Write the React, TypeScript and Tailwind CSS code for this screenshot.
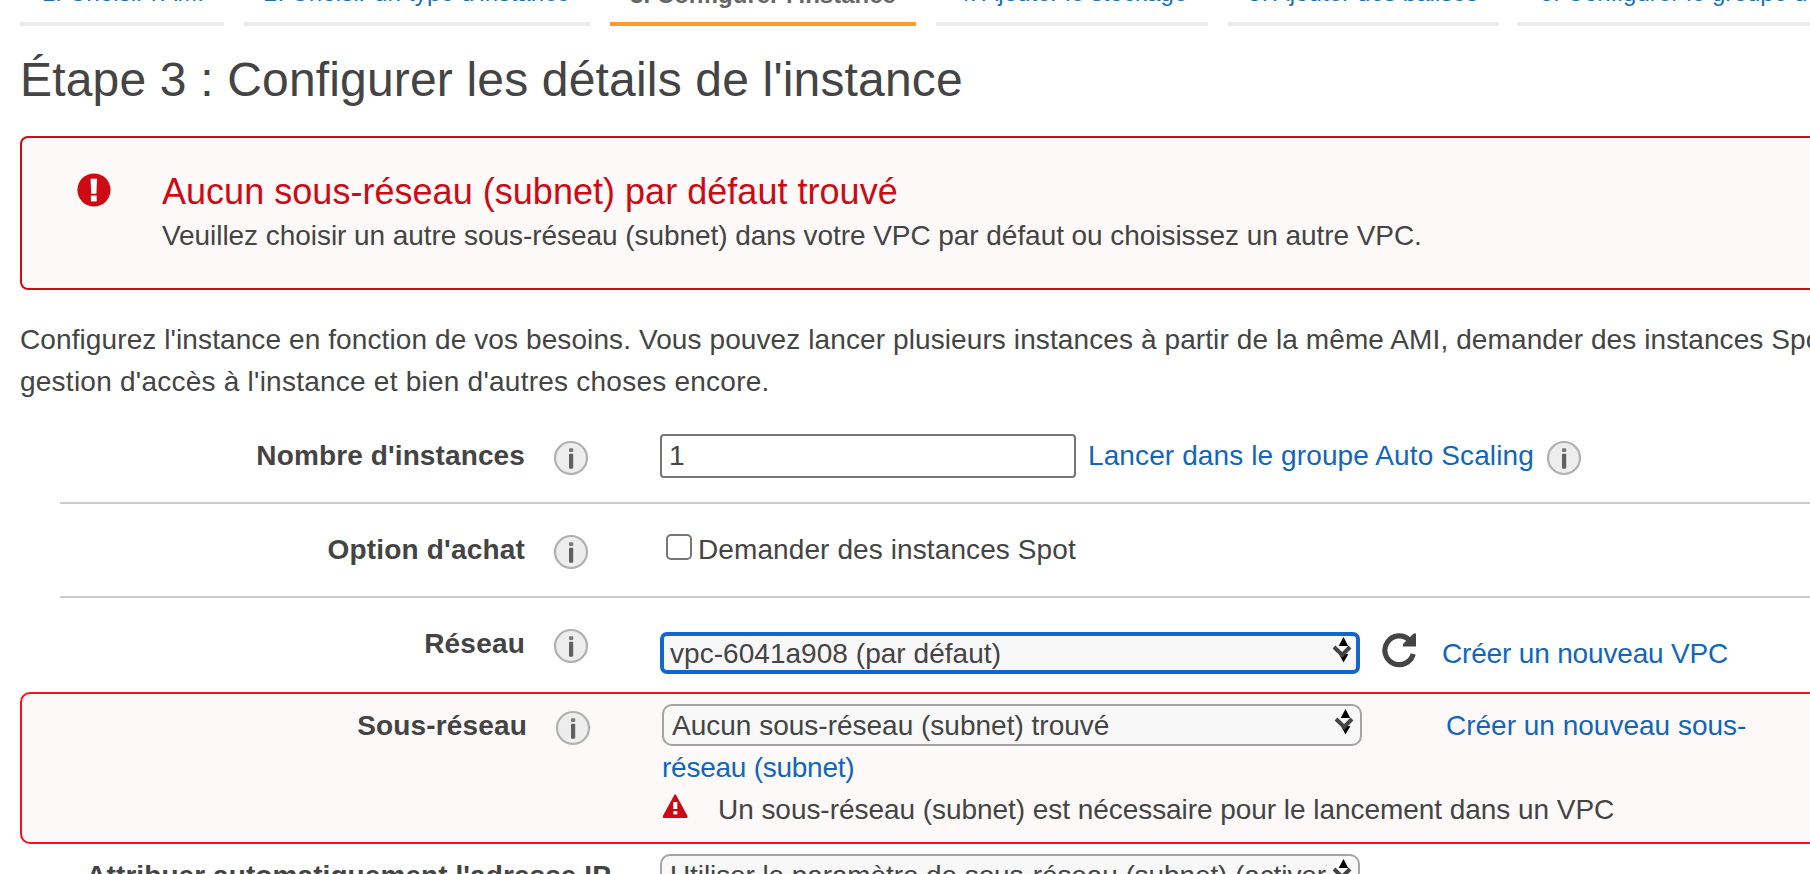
import type { ReactNode } from "react";

type Tab = { label: string; className: string };

const tabs: Tab[] = [
  { label: "1. Choisir l'AMI", className: "w-[204px] pl-0.5 tracking-[0.1px]" },
  { label: "2. Choisir un type d'instance", className: "w-[346px] tracking-[0.19px]" },
  { label: "3. Configurer l'instance", className: "w-[306px]" },
  { label: "4. Ajouter le stockage", className: "w-[272px] tracking-[0.05px]" },
  { label: "5. Ajouter des balises", className: "w-[270px] tracking-[0.09px]" },
  { label: "6. Configurer le groupe de sécurité", className: "w-[416px] tracking-[0.1px]" },
];

function InfoIcon({ className = "" }: { className?: string }) {
  return (
    <svg className={`size-9 shrink-0 ${className}`} viewBox="0 0 36 36">
      <circle cx="18" cy="18" r="16" fill="#ededed" stroke="#b0b0b0" strokeWidth="2.2" />
      <rect x="16" y="8.3" width="4.2" height="3.6" rx="1" fill="#777" />
      <rect x="16" y="13.8" width="4.2" height="15" rx="1" fill="#606060" />
    </svg>
  );
}

function AlertIcon() {
  return (
    <svg className="h-[34px] w-[34px] shrink-0" viewBox="0 0 34 34">
      <circle cx="17" cy="17" r="16.6" fill="#cc0b14" />
      <path d="M13.6 5.8h6.4l-.6 15h-5.2z" fill="#fff" />
      <rect x="13.9" y="22.6" width="5.8" height="5.8" fill="#fff" />
    </svg>
  );
}

function WarningIcon() {
  return (
    <svg className="h-[26px] w-[27px] shrink-0" viewBox="0 0 27 26">
      <path
        d="M13.2 2.2 24.6 23.2v.8H1.8v-.8z"
        fill="#cc0b14"
        stroke="#cc0b14"
        strokeWidth="1.8"
        strokeLinejoin="round"
      />
      <rect x="11.3" y="9" width="4" height="7" fill="#fff" />
      <rect x="11.3" y="18" width="4" height="3.4" fill="#fff" />
    </svg>
  );
}

function RefreshIcon() {
  return (
    <svg className="size-9 shrink-0" viewBox="0 0 36 36">
      <path
        d="M32.2 22A14.4 14.4 0 1 1 28.6 8.2"
        fill="none"
        stroke="#444"
        strokeWidth="5.2"
      />
      <path d="M35 1.6v12.9H22v-2.6L32.6 1.6z" fill="#444" />
    </svg>
  );
}

function SelectArrows() {
  return (
    <svg className="h-7 w-5 shrink-0" viewBox="0 0 20 28">
      <path d="M7 18h9.4l-4.9 8.6z" fill="#000" />
      <path d="M2 11 10.2 19 18 11" fill="none" stroke="#444" strokeWidth="4" />
      <path d="M11.5 1 16.2 10H6.7z" fill="#000" />
    </svg>
  );
}

function SelectBox({
  children,
  focused = false,
  className = "",
}: {
  children: ReactNode;
  focused?: boolean;
  className?: string;
}) {
  return (
    <button
      type="button"
      className={`flex h-[42px] w-[700px] shrink-0 items-start overflow-hidden bg-[#f8f8f8] text-left leading-[42px] whitespace-nowrap ${
        focused
          ? "rounded-[7px] border-4 border-[#1166d0] pl-1.5"
          : "rounded-[10px] border-2 border-[#a3a3a3] pl-2"
      } ${className}`}
    >
      <span className={`w-[657px] shrink-0 overflow-hidden ${focused ? "-mt-[3px]" : "-mt-px"}`}>
        {children}
      </span>
      <span className={`ml-[5px] ${focused ? "mt-0" : "mt-0.5"}`}>
        <SelectArrows />
      </span>
    </button>
  );
}

function Label({ children, className = "" }: { children: ReactNode; className?: string }) {
  return (
    <div className={`flex w-[589px] shrink-0 items-start justify-end ${className}`}>
      <span className="mr-[28px] font-bold">{children}</span>
      <InfoIcon className="mt-[5px]" />
    </div>
  );
}

export default function App() {
  return (
    <div className="h-[874px] w-full overflow-hidden bg-white font-['Liberation_Sans',Arial,sans-serif] text-[28px] leading-[42px] whitespace-nowrap text-[#444]">
      <nav className="-mt-[25px] ml-5 flex h-[51px] gap-5 text-2xl leading-9">
        {tabs.map((tab, index) => (
          <a
            key={tab.label}
            className={`shrink-0 border-b-4 text-center ${
              index === 2
                ? "border-[#ff9a2e] pt-0.5 font-bold text-[#666]"
                : "border-[#ebebeb] text-[#1a6fb5]"
            } ${tab.className}`}
          >
            {tab.label}
          </a>
        ))}
      </nav>

      <h1 className="mt-[18px] ml-5 text-5xl leading-[72px] tracking-[0.17px]">
        Étape 3 : Configurer les détails de l'instance
      </h1>

      <section className="mt-5 ml-5 flex h-[154px] w-[1850px] rounded-lg border-2 border-[#cc0b14] bg-[#fdf9f8] pl-[55px]">
        <div className="pt-[35px]">
          <AlertIcon />
        </div>
        <div className="ml-[51px] pt-[31px]">
          <h2 className="text-4xl leading-[46px] tracking-[0.03px] text-[#cc0b14]">
            Aucun sous-réseau (subnet) par défaut trouvé
          </h2>
          <p className="tracking-[-0.055px]">
            Veuillez choisir un autre sous-réseau (subnet) dans votre VPC par défaut ou choisissez
            un autre VPC.
          </p>
        </div>
      </section>

      <div className="mt-[29px] ml-5">
        <p className="tracking-[0.1px]">
          Configurez l'instance en fonction de vos besoins. Vous pouvez lancer plusieurs instances à
          partir de la même AMI, demander des instances Spot
        </p>
        <p className="tracking-[0.24px]">
          gestion d'accès à l'instance et bien d'autres choses encore.
        </p>
      </div>

      <form className="mt-[7px]">
        <div className="ml-[60px] flex h-[94px] border-b-2 border-[#ccc]">
          <Label className="-ml-[60px] pt-[25px] tracking-[0.12px]">Nombre d'instances</Label>
          <div className="ml-[71px] flex items-start">
            <input
              type="text"
              defaultValue="1"
              className="mt-6 h-[44px] w-[416px] rounded border-2 border-[#767676] bg-white pl-[7px] leading-10 outline-none"
            />
            <a className="mt-[25px] ml-3 tracking-[0.11px] text-[#1166bb]">
              Lancer dans le groupe Auto Scaling
            </a>
            <InfoIcon className="mt-[30px] ml-3" />
          </div>
        </div>

        <div className="ml-[60px] flex h-[94px] border-b-2 border-[#ccc]">
          <Label className="-ml-[60px] pt-[25px] tracking-[0.18px]">Option d'achat</Label>
          <label className="ml-[77px] flex items-start">
            <input
              type="checkbox"
              className="mt-[30px] size-[26px] appearance-none rounded-[5px] border-2 border-[#767676] bg-white"
            />
            <span className="mt-[25px] ml-1.5 tracking-[0.1px]">Demander des instances Spot</span>
          </label>
        </div>

        <div className="flex h-[94px]">
          <Label className="pt-[25px] tracking-[0.2px]">Réseau</Label>
          <div className="ml-[71px] flex items-start">
            <SelectBox focused className="mt-[34px] tracking-[0.04px]">
              vpc-6041a908 (par défaut)
            </SelectBox>
            <span className="mt-[34px] ml-[21px]">
              <RefreshIcon />
            </span>
            <a className="mt-[35px] ml-[25px] tracking-[-0.17px] text-[#1166bb]">
              Créer un nouveau VPC
            </a>
          </div>
        </div>

        <div className="ml-5 flex h-[152px] w-[1850px] rounded-[10px] border-2 border-[#ff0f1e] bg-[#fdf9f8]">
          <Label className="-ml-5 pt-[11px] tracking-[0.15px]">Sous-réseau</Label>
          <div className="ml-[71px]">
            <div className="flex items-start pt-2.5">
              <SelectBox>Aucun sous-réseau (subnet) trouvé</SelectBox>
              <a className="mt-px ml-[84px] text-[#1166bb]">Créer un nouveau sous-</a>
            </div>
            <div>
              <a className="tracking-[-0.25px] text-[#1166bb]">réseau (subnet)</a>
            </div>
            <div className="flex items-start">
              <span className="mt-1">
                <WarningIcon />
              </span>
              <span className="ml-[29px] tracking-[-0.05px]">
                Un sous-réseau (subnet) est nécessaire pour le lancement dans un VPC
              </span>
            </div>
          </div>
        </div>

        <div className="flex">
          <div className="mt-[11px] w-[611px] text-right font-bold tracking-[0.08px]">
            Attribuer automatiquement l'adresse IP
          </div>
          <SelectBox className="mt-2.5 ml-[49px] tracking-[-0.1px]">
            Utiliser le paramètre de sous-réseau (subnet) (activer)
          </SelectBox>
        </div>
      </form>
    </div>
  );
}
